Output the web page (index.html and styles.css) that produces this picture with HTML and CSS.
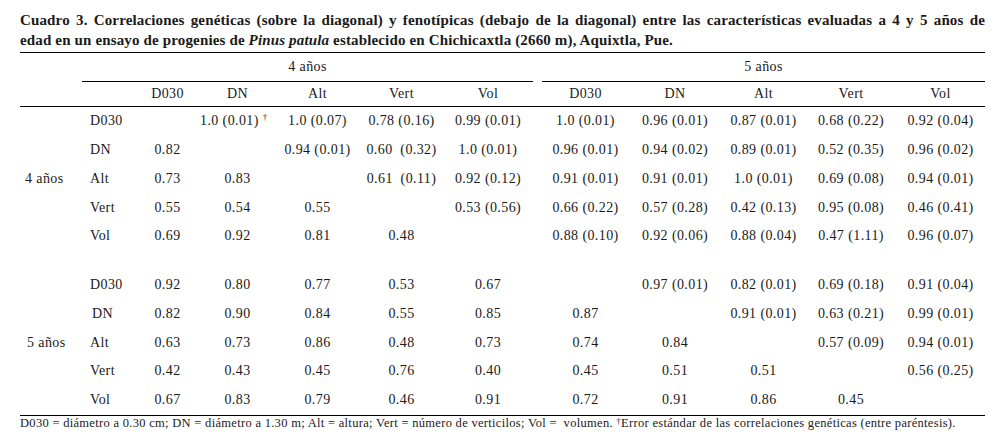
FILE: index.html
```html
<!DOCTYPE html>
<html lang="es">
<head>
<meta charset="utf-8">
<title>Cuadro 3</title>
<link rel="stylesheet" href="styles.css">
</head>
<body>
<div class="page">
  <div class="caption">
    <div class="cap-line justify">Cuadro 3. Correlaciones genéticas (sobre la diagonal) y fenotípicas (debajo de la diagonal) entre las características evaluadas a 4 y 5 años de</div>
    <div class="cap-line">edad en un ensayo de progenies de <i>Pinus patula</i> establecido en Chichicaxtla (2660 m), Aquixtla, Pue.</div>
  </div>
  <table class="data">
    <colgroup>
      <col class="c-grp"><col class="c-lbl">
      <col class="c-a1"><col class="c-a2"><col class="c-a3"><col class="c-a4"><col class="c-a5">
      <col class="c-gap">
      <col class="c-b1"><col class="c-b2"><col class="c-b3"><col class="c-b4"><col class="c-b5">
    </colgroup>
    <thead>
      <tr class="grp-head">
        <th></th>
        <th colspan="6" class="grp grp4">4 años</th>
        <th></th>
        <th colspan="5" class="grp grp5">5 años</th>
      </tr>
      <tr class="col-head">
        <th></th><th></th>
        <th>D030</th><th>DN</th><th>Alt</th><th>Vert</th><th>Vol</th>
        <th></th>
        <th>D030</th><th>DN</th><th>Alt</th><th>Vert</th><th>Vol</th>
      </tr>
    </thead>
    <tbody>
      <tr>
        <td></td><td class="lbl">D030</td>
        <td></td><td class="dag">1.0 (0.01) <sup>†</sup></td><td>1.0 (0.07)</td><td>0.78 (0.16)</td><td>0.99 (0.01)</td>
        <td></td>
        <td>1.0 (0.01)</td><td>0.96 (0.01)</td><td>0.87 (0.01)</td><td>0.68 (0.22)</td><td>0.92 (0.04)</td>
      </tr>
      <tr>
        <td></td><td class="lbl">DN</td>
        <td>0.82</td><td></td><td>0.94 (0.01)</td><td>0.60&nbsp; (0.32)</td><td>1.0 (0.01)</td>
        <td></td>
        <td>0.96 (0.01)</td><td>0.94 (0.02)</td><td>0.89 (0.01)</td><td>0.52 (0.35)</td><td>0.96 (0.02)</td>
      </tr>
      <tr>
        <td class="grp-lbl">4 años</td><td class="lbl">Alt</td>
        <td>0.73</td><td>0.83</td><td></td><td>0.61&nbsp; (0.11)</td><td>0.92 (0.12)</td>
        <td></td>
        <td>0.91 (0.01)</td><td>0.91 (0.01)</td><td>1.0 (0.01)</td><td>0.69 (0.08)</td><td>0.94 (0.01)</td>
      </tr>
      <tr>
        <td></td><td class="lbl">Vert</td>
        <td>0.55</td><td>0.54</td><td>0.55</td><td></td><td>0.53 (0.56)</td>
        <td></td>
        <td>0.66 (0.22)</td><td>0.57 (0.28)</td><td>0.42 (0.13)</td><td>0.95 (0.08)</td><td>0.46 (0.41)</td>
      </tr>
      <tr>
        <td></td><td class="lbl">Vol</td>
        <td>0.69</td><td>0.92</td><td>0.81</td><td>0.48</td><td></td>
        <td></td>
        <td>0.88 (0.10)</td><td>0.92 (0.06)</td><td>0.88 (0.04)</td><td>0.47 (1.11)</td><td>0.96 (0.07)</td>
      </tr>
      <tr class="spacer"><td colspan="13"></td></tr>
      <tr>
        <td></td><td class="lbl">D030</td>
        <td>0.92</td><td>0.80</td><td>0.77</td><td>0.53</td><td>0.67</td>
        <td></td>
        <td></td><td>0.97 (0.01)</td><td>0.82 (0.01)</td><td>0.69 (0.18)</td><td>0.91 (0.04)</td>
      </tr>
      <tr>
        <td></td><td class="lbl ind">DN</td>
        <td>0.82</td><td>0.90</td><td>0.84</td><td>0.55</td><td>0.85</td>
        <td></td>
        <td>0.87</td><td></td><td>0.91 (0.01)</td><td>0.63 (0.21)</td><td>0.99 (0.01)</td>
      </tr>
      <tr>
        <td class="grp-lbl g5">5 años</td><td class="lbl">Alt</td>
        <td>0.63</td><td>0.73</td><td>0.86</td><td>0.48</td><td>0.73</td>
        <td></td>
        <td>0.74</td><td>0.84</td><td></td><td>0.57 (0.09)</td><td>0.94 (0.01)</td>
      </tr>
      <tr>
        <td></td><td class="lbl">Vert</td>
        <td>0.42</td><td>0.43</td><td>0.45</td><td>0.76</td><td>0.40</td>
        <td></td>
        <td>0.45</td><td>0.51</td><td>0.51</td><td></td><td>0.56 (0.25)</td>
      </tr>
      <tr class="last">
        <td></td><td class="lbl">Vol</td>
        <td>0.67</td><td>0.83</td><td>0.79</td><td>0.46</td><td>0.91</td>
        <td></td>
        <td>0.72</td><td>0.91</td><td>0.86</td><td>0.45</td><td></td>
      </tr>
    </tbody>
  </table>
  <p class="note">D030 = diámetro a 0.30 cm; DN = diámetro a 1.30 m; Alt = altura; Vert = número de verticilos; Vol =&nbsp; volumen. <sup>†</sup>Error estándar de las correlaciones genéticas (entre paréntesis).</p>
</div>
</body>
</html>
```
FILE: styles.css
```css
html, body {
  margin: 0;
  padding: 0;
  background: #ffffff;
}

body {
  color: #1a1a1a;
  font-family: "Liberation Serif", "Times New Roman", serif;
}

.page {
  width: 965px;
  padding: 10px 20px 0 20px;
}

.caption {
  font-weight: bold;
  font-size: 15px;
  line-height: 20px;
  letter-spacing: 0.15px;
  padding-bottom: 2px;
}

.cap-line.justify {
  text-align: justify;
  text-align-last: justify;
}

.data {
  width: 965px;
  table-layout: fixed;
  border-collapse: collapse;
  border-top: 1px solid #000;
  border-bottom: 1px solid #000;
  font-size: 14px;
  letter-spacing: 0.4px;
}

.c-grp { width: 62px; }
.c-lbl { width: 53px; }
.c-a1 { width: 65px; }
.c-a2 { width: 75px; }
.c-a3 { width: 85px; }
.c-a4 { width: 83px; }
.c-a5 { width: 90px; }
.c-gap { width: 9px; }
.c-b1 { width: 87px; }
.c-b2 { width: 92px; }
.c-b3 { width: 85px; }
.c-b4 { width: 90px; }
.c-b5 { width: 89px; }

.data th {
  font-weight: normal;
  padding: 0;
  text-align: center;
  white-space: nowrap;
}

.data td {
  padding: 0;
  text-align: center;
  white-space: nowrap;
}

.grp-head th {
  height: 28px;
}

.grp {
  border-bottom: 1px solid #000;
}

.grp5 {
  padding-left: 20px;
}

.col-head th {
  height: 24px;
  border-bottom: 1px solid #000;
}

.data tbody td {
  height: 28.75px;
}

.data tbody tr.spacer td {
  height: 20px;
}

.data td.lbl {
  text-align: left;
  padding-left: 8px;
}

.data td.lbl.ind {
  padding-left: 10px;
}

.data td.grp-lbl {
  text-align: left;
  padding-left: 5px;
}

.data td.grp-lbl.g5 {
  padding-left: 7px;
}

.data td.dag {
  padding-right: 16px;
}

.data sup {
  font-size: 9px;
  vertical-align: 5px;
  line-height: 0;
}

.note {
  margin: 0;
  font-size: 12.5px;
  line-height: 14px;
  letter-spacing: 0.3px;
}

.note sup {
  font-size: 9px;
  vertical-align: 3px;
  line-height: 0;
}
```
